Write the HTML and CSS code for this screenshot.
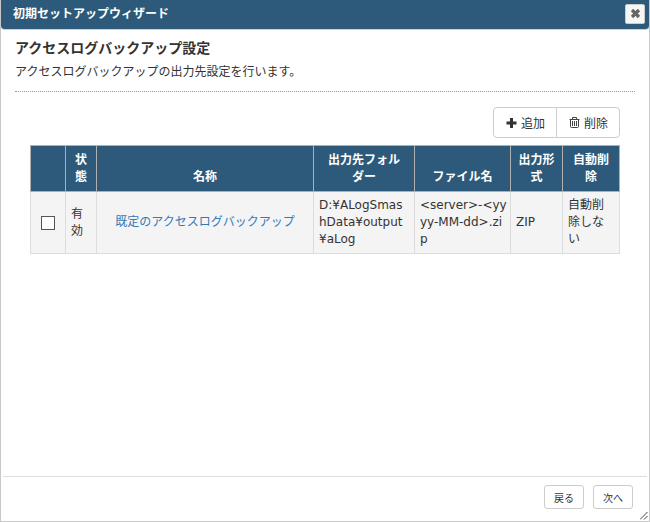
FILE: index.html
```html
<!DOCTYPE html>
<html lang="ja">
<head>
    <meta charset="UTF-8">
    <meta name="viewport" content="width=device-width, initial-scale=1.0">
    <title>初期セットアップウィザード</title>
    <link rel="stylesheet" href="styles.css">
</head>
<body>
    <div class="dialog">
        <div class="dialog-header">
            <span class="dialog-title">初期セットアップウィザード</span>
            <button type="button" class="close-button" aria-label="閉じる">
                <svg width="11" height="11" viewBox="0 0 11 11"><path d="M2 2L9 9M9 2L2 9" stroke="#666" stroke-width="3.2" fill="none"/></svg>
            </button>
        </div>

        <div class="dialog-body">
            <h1>アクセスログバックアップ設定</h1>
            <p class="description">アクセスログバックアップの出力先設定を行います。</p>

            <div class="content">
                <div class="toolbar">
                    <button type="button" class="tool-button">
                        <svg width="11" height="10" viewBox="0 0 11 10"><path d="M5.5 0V10M0.5 5H10.5" stroke="#333" stroke-width="3" fill="none"/></svg>
                        <span>追加</span>
                    </button>
                    <button type="button" class="tool-button">
                        <svg width="11" height="11" viewBox="0 0 11 11" fill="none" stroke="#444"><path d="M.5 2.5H10.5M3.5 2.5V.5H7.5V2.5M1.5 2.5V9.5Q1.5 10.5 2.5 10.5H8.5Q9.5 10.5 9.5 9.5V2.5M3.5 4V9M5.5 4V9M7.5 4V9"/></svg>
                        <span>削除</span>
                    </button>
                </div>

                <table class="backup-table">
                    <colgroup>
                        <col class="col-check">
                        <col class="col-state">
                        <col class="col-name">
                        <col class="col-folder">
                        <col class="col-file">
                        <col class="col-format">
                        <col class="col-delete">
                    </colgroup>
                    <thead>
                        <tr>
                            <th></th>
                            <th>状態</th>
                            <th>名称</th>
                            <th>出力先フォルダー</th>
                            <th>ファイル名</th>
                            <th>出力形式</th>
                            <th>自動削除</th>
                        </tr>
                    </thead>
                    <tbody>
                        <tr>
                            <td class="center"><input type="checkbox" class="row-check" aria-label="既定のアクセスログバックアップを選択"></td>
                            <td>有効</td>
                            <td class="center"><a href="#">既定のアクセスログバックアップ</a></td>
                            <td class="path">D:¥ALogSmas<br>hData¥output<br>¥aLog</td>
                            <td class="path">&lt;server&gt;-&lt;yy<br>yy-MM-dd&gt;.zi<br>p</td>
                            <td>ZIP</td>
                            <td>自動削除しない</td>
                        </tr>
                    </tbody>
                </table>
            </div>
        </div>

        <div class="dialog-footer">
            <button type="button" class="nav-button">戻る</button>
            <button type="button" class="nav-button">次へ</button>
        </div>
        <svg class="resize-grip" width="8" height="8" viewBox="0 0 8 8"><path d="M0 7.5L7.5 0M4 7.5L7.5 4" stroke="#444" fill="none"/></svg>
    </div>
</body>
</html>
```

FILE: styles.css
```css
* {
    box-sizing: border-box;
}
body {
    margin: 0;
    font-family: "DejaVu Sans", "Noto Sans CJK JP", sans-serif;
    font-size: 12px;
    line-height: 17px;
    color: #333;
    background-color: white;
}
button {
    font-family: inherit;
    color: #333;
    background-color: white;
    border: 1px solid #ccc;
    cursor: pointer;
}
button:hover {
    background-color: #eee;
}
.dialog {
    position: relative;
    display: flex;
    flex-direction: column;
    min-height: 100vh;
    border: 1px solid #c8c8c8;
    border-top: none;
}
.dialog-header {
    display: flex;
    align-items: center;
    justify-content: space-between;
    height: 30px;
    padding: 0 4px 2px 12px;
    background-color: #2d5a7b;
    border-bottom: 1px solid #c8d0dc;
    border-radius: 0 0 4px 4px;
}
.dialog-title {
    padding-top: 2px;
    color: white;
    font-weight: bold;
}
.close-button {
    display: flex;
    align-items: center;
    justify-content: center;
    width: 20px;
    height: 20px;
    padding: 0;
    background-color: #f6f6f6;
    border-radius: 2px;
}
.dialog-body {
    flex: 1;
    padding: 8px 14px;
}
h1 {
    margin: 0;
    font-size: 14px;
    line-height: 20px;
}
.description {
    margin: 0;
    padding: 6px 0 10px;
    border-bottom: 1px dotted #999;
}
.content {
    padding: 15px;
}
.toolbar {
    display: flex;
    justify-content: flex-end;
    margin-bottom: 7px;
}
.tool-button {
    display: flex;
    align-items: center;
    gap: 4px;
    height: 31px;
    padding: 0 11px 0 12px;
    font-size: 12px;
}
.tool-button:first-child {
    border-radius: 4px 0 0 4px;
}
.tool-button:last-child {
    margin-left: -1px;
    border-radius: 0 4px 4px 0;
}
.backup-table {
    width: 100%;
    table-layout: fixed;
    border-collapse: collapse;
    line-break: strict;
}
.backup-table th {
    padding: 6px 5px 5px;
    color: white;
    vertical-align: bottom;
    background-color: #2d5a7b;
    border: 1px solid #b0b0b0;
}
.backup-table td {
    padding: 5px;
    background-color: #f4f4f4;
    border: 1px solid #ddd;
}
.backup-table td.center {
    text-align: center;
}
.backup-table td.path {
    white-space: nowrap;
}
.backup-table a {
    color: #337ab7;
    text-decoration: none;
}
.backup-table a:hover {
    text-decoration: underline;
}
.col-check {
    width: 35px;
}
.col-state {
    width: 31px;
}
.col-folder {
    width: 101px;
}
.col-file {
    width: 96px;
}
.col-format {
    width: 52px;
}
.col-delete {
    width: 57px;
}
.row-check {
    appearance: none;
    width: 14px;
    height: 14px;
    margin: 0;
    vertical-align: middle;
    background-color: white;
    border: 1px solid #555;
}
.row-check:checked {
    background-color: #2d5a7b;
}
.dialog-footer {
    display: flex;
    justify-content: flex-end;
    gap: 9px;
    margin: 0 2px;
    padding: 8px 14px 12px;
    border-top: 1px solid #ddd;
}
.nav-button {
    width: 40px;
    height: 24px;
    padding: 0;
    font-size: 10px;
    border-radius: 3px;
}
.resize-grip {
    position: absolute;
    right: 1px;
    bottom: 1px;
}
```
